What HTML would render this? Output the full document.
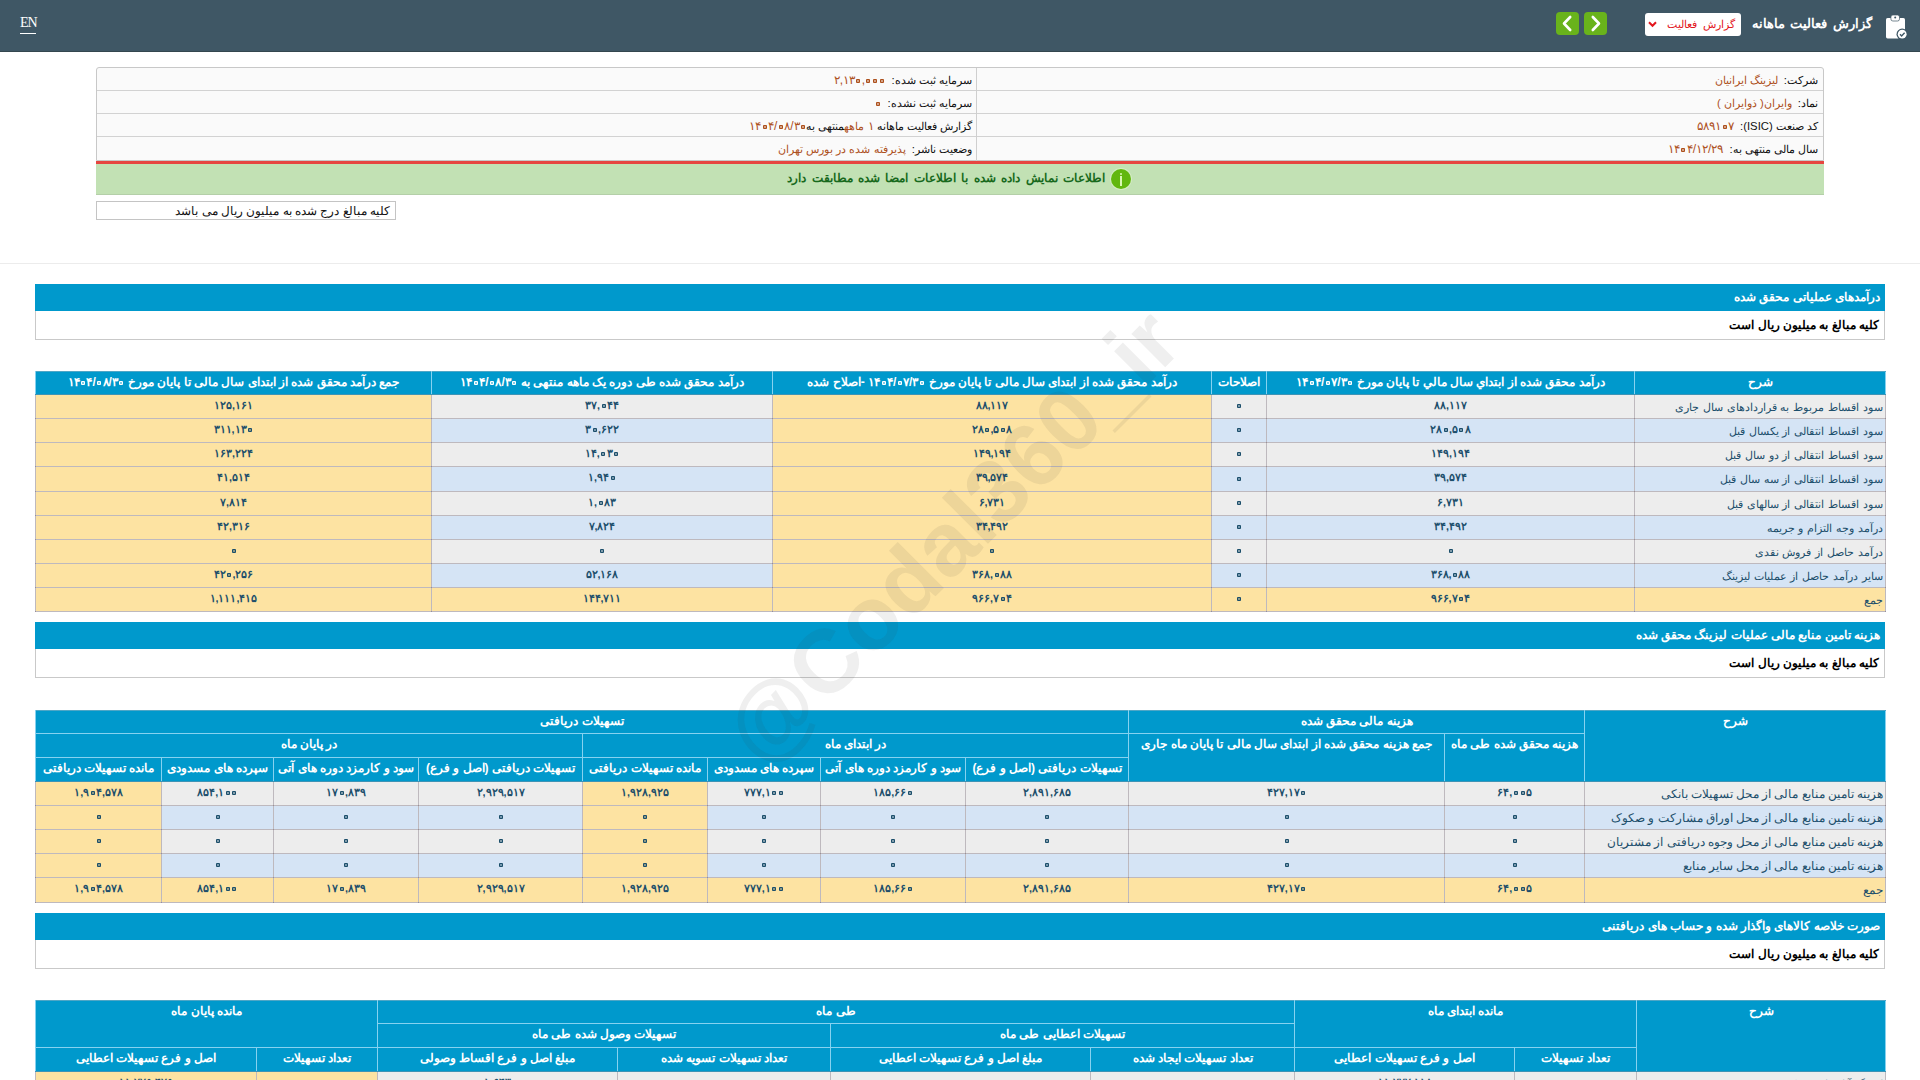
<!DOCTYPE html>
<html lang="fa" dir="rtl">
<head>
<meta charset="utf-8">
<title>گزارش فعالیت ماهانه</title>
<style>
*{box-sizing:border-box;margin:0;padding:0}
html,body{width:1920px;height:1080px;overflow:hidden;background:#fff}
body{position:relative;direction:rtl;font-family:"Liberation Sans",sans-serif;font-size:12px;color:#000}
.abs{position:absolute}
/* ---------- top bar ---------- */
#top{position:absolute;left:0;top:0;width:1920px;height:52px;background:#3f5765;border-bottom:1px solid #34474f}
#en{position:absolute;left:20px;top:13px;width:16px;height:21px;border-bottom:1px solid #fff;color:#fff;font-family:"Liberation Serif",serif;font-size:14px;letter-spacing:-1px;line-height:20px;direction:ltr;text-align:center;white-space:nowrap}
#ttl{position:absolute;right:48px;top:12px;height:24px;line-height:24px;color:#fff;font-weight:bold;font-size:13.4px;word-spacing:2px;white-space:nowrap}
#dd{position:absolute;left:1645px;top:13px;width:96px;height:23px;background:#fff;border-radius:3px;color:#e3161d;font-size:11.2px;word-spacing:3px;line-height:22px;text-align:right;padding-right:6px;white-space:nowrap}
.gb{position:absolute;top:12px;width:23px;height:23px;background:#69b31b;border-radius:4px}
/* ---------- info box ---------- */
#info{position:absolute;left:96px;top:67px;width:1728px;height:94px;background:#fafafa;border:1px solid #c8c8c8;border-radius:3px 3px 0 0}
#info .r{position:absolute;left:0;width:1726px;height:23px;border-bottom:1px solid #d2d2d2}
#info .vd{position:absolute;left:879px;top:0;width:1px;height:93px;background:#cfcfcf}
#info .c{position:absolute;top:0;height:23px;line-height:25px;white-space:nowrap;font-size:11.3px;color:#111}
#info .c.rt{right:5px}
#info .c.lf{right:851px}
#info b{font-weight:normal;color:#ad501c;margin-right:3px}
#info .n{font-size:12px}
#red{position:absolute;left:96px;top:161px;width:1728px;height:3px;background:#e64540}
#grn{position:absolute;left:96px;top:164px;width:1728px;height:31px;background:#c2e1b4;border-bottom:1px solid #b4cfa8}
#grn .t{position:absolute;left:693px;top:0;width:316px;height:30px;line-height:29px;color:#17691c;font-weight:bold;font-size:12px;word-spacing:2.1px;white-space:nowrap;text-align:right}
#grn .i{position:absolute;left:1015px;top:5px;width:20px;height:20px;border-radius:50%;background:#62b70f;box-shadow:0 0 0 1px rgba(225,248,205,.55)}
#grn .i:before{content:"";position:absolute;left:9px;top:4px;width:2.4px;height:2px;background:#d9f7b3;border-radius:1px}
#grn .i:after{content:"";position:absolute;left:9px;top:7px;width:2.4px;height:10px;background:#d9f7b3}
#note{position:absolute;left:96px;top:201px;width:300px;height:19px;border:1px solid #c4c4c4;background:#fff;font-size:12px;line-height:18px;text-align:right;padding-right:5px;white-space:nowrap;color:#111}
#hr{position:absolute;left:0;top:263px;width:1920px;height:1px;background:#ececec}
/* ---------- section title boxes ---------- */
.sec{position:absolute;left:35px;width:1850px;height:56px;border:1px solid #c9c9c9;border-top:none;background:#fff}
.sec .h{position:absolute;left:-1px;top:0;width:1850px;height:27px;background:#0099cc;color:#fff;font-weight:bold;font-size:12px;line-height:27px;text-align:right;padding-right:5px;white-space:nowrap}
.sec .s{position:absolute;right:5px;top:27px;height:28px;line-height:28px;font-weight:bold;font-size:12px;color:#000;white-space:nowrap}
/* ---------- data tables ---------- */
table.g{position:absolute;left:35px;width:1850px;border-collapse:collapse;table-layout:fixed;direction:rtl}
table.g th,table.g td{border:1px solid rgba(100,88,100,.42);overflow:hidden;white-space:nowrap;font-size:12px;padding:0 3px}
table.g th{background:#0099cc;color:#fff;font-weight:bold;text-align:center;vertical-align:top;border-color:#86d2f0;line-height:21px}
table.g thead tr:first-child th{border-top-color:#4fa6c6}
table.g thead tr:last-child th,table.g thead th[rowspan="3"],table.g thead tr:nth-child(2) th[rowspan="2"]{border-bottom-color:#3d94b6}
table.g td{color:#1c4f6b;text-align:center;vertical-align:middle;line-height:19px;padding-bottom:3px;font-weight:bold;font-size:10.8px}
table.g td.l{text-align:right;font-weight:normal;padding-right:2px;padding-bottom:0;line-height:22px;font-size:11.3px;word-spacing:.7px}
#t2 td.l{font-size:11.6px;word-spacing:0}
table.g tr{height:24px}
table.g thead tr{height:24px}
table.g thead tr:first-child{height:23px}
table.g tr.x{height:25px}
table.g tr.a td{background:#ededed}
table.g tr.b td{background:#d5e4f5}
table.g tr td.y,table.g tr.s td{background:#fde3a2}
i.z{display:inline-block;width:6px;height:6px;background:radial-gradient(circle at 50% 50%,transparent .45px,currentColor .95px,currentColor 2px,transparent 2.5px);font-size:0;line-height:0;overflow:hidden;vertical-align:-.1px;margin:0 .4px;letter-spacing:0}
.n{direction:ltr;unicode-bidi:bidi-override;white-space:nowrap}
table.g td .n.s{display:block;position:relative;height:19px}
table.g td .n.s i.z{position:absolute;left:50%;margin:0 0 0 -3px;top:7.6px}
/* ---------- watermark ---------- */
#wm{position:absolute;left:952px;top:536px;width:0;height:0;direction:ltr;z-index:5}
#wm span{position:absolute;left:-320px;top:-55px;width:640px;height:110px;line-height:110px;text-align:center;font-weight:bold;font-size:90px;color:rgba(55,55,55,.08);transform:rotate(-44.9deg);white-space:nowrap;letter-spacing:0}
</style>
</head>
<body>

<!-- top bar -->
<div id="top">
  <div id="en">EN</div>
  <svg class="abs" style="left:1885px;top:14px" width="22" height="26" viewBox="0 0 22 26">
    <rect x="1" y="4" width="19" height="20.4" rx="1.6" fill="#fff"/>
    <rect x="5.9" y="1" width="8.6" height="6" rx="2" fill="#fff" stroke="#3f5765" stroke-width=".7"/>
    <circle cx="10.2" cy="3.5" r="1" fill="#3f5765"/>
    <circle cx="17.2" cy="20.2" r="5.7" fill="#3f5765"/>
    <circle cx="17.2" cy="20.2" r="4.4" fill="#fff"/>
    <path d="M15 20.3l1.6 1.6 3-3.2" fill="none" stroke="#3f5765" stroke-width="1.4"/>
  </svg>
  <div id="ttl">گزارش فعالیت ماهانه</div>
  <div id="dd">گزارش فعالیت
    <svg class="abs" style="left:3px;top:8px" width="9" height="7" viewBox="0 0 9 7"><path d="M1 1.2l3.5 3.6L8 1.2" fill="none" stroke="#e3161d" stroke-width="2"/></svg>
  </div>
  <div class="gb" style="left:1556px"><svg width="23" height="23" viewBox="0 0 23 23"><path d="M14.2 5l-6.2 6.5 6.2 6.5" fill="none" stroke="#fff" stroke-width="2.6" stroke-linecap="round" stroke-linejoin="round"/></svg></div>
  <div class="gb" style="left:1584px"><svg width="23" height="23" viewBox="0 0 23 23"><path d="M8.8 5l6.2 6.5-6.2 6.5" fill="none" stroke="#fff" stroke-width="2.6" stroke-linecap="round" stroke-linejoin="round"/></svg></div>
</div>

<!-- info box -->
<div id="info">
  <div class="r" style="top:0"><div class="c rt">شرکت: <b>لیزینگ ایرانیان</b></div><div class="c lf">سرمایه ثبت شده: <b><span class="n">۲,۱۳<i class="z">۰</i>,<i class="z">۰</i><i class="z">۰</i><i class="z">۰</i></span></b></div></div>
  <div class="r" style="top:23px"><div class="c rt">نماد: <b>وایران( ذوایران )</b></div><div class="c lf">سرمایه ثبت نشده: <b><span class="n s"><i class="z">۰</i></span></b></div></div>
  <div class="r" style="top:46px"><div class="c rt">کد صنعت (ISIC): <b><span class="n">۵۸۹۱<i class="z">۰</i>۷</span></b></div><div class="c lf">گزارش فعالیت ماهانه <b style="margin:0"><span class="n">۱</span> ماهه</b>منتهی به<b style="margin:0"><span class="n">۱۴<i class="z">۰</i>۴/<i class="z">۰</i>۸/۳<i class="z">۰</i></span></b></div></div>
  <div class="r" style="top:69px;border-bottom:none"><div class="c rt">سال مالی منتهی به: <b><span class="n">۱۴<i class="z">۰</i>۴/۱۲/۲۹</span></b></div><div class="c lf">وضعیت ناشر: <b>پذیرفته شده در بورس تهران</b></div></div>
  <div class="vd"></div>
</div>
<div id="red"></div>
<div id="grn"><div class="t">اطلاعات نمایش داده شده با اطلاعات امضا شده مطابقت دارد</div><div class="i"></div></div>
<div id="note">کلیه مبالغ درج شده به میلیون ریال می باشد</div>
<div id="hr"></div>

<!-- section 1 -->
<div class="sec" style="top:284px"><div class="h">درآمدهای عملیاتی محقق شده</div><div class="s">کلیه مبالغ به میلیون ریال است</div></div>

<table class="g" id="t1" style="top:371px">
<colgroup><col style="width:251px"><col style="width:368px"><col style="width:55px"><col style="width:439px"><col style="width:341px"><col style="width:396px"></colgroup>
<thead><tr class="h1">
<th>شرح</th>
<th>درآمد محقق شده از ابتداي سال مالي تا پايان مورخ <span class="n">۱۴<i class="z">۰</i>۴/<i class="z">۰</i>۷/۳<i class="z">۰</i></span></th>
<th>اصلاحات</th>
<th>درآمد محقق شده از ابتدای سال مالی تا پایان مورخ <span class="n">۱۴<i class="z">۰</i>۴/<i class="z">۰</i>۷/۳<i class="z">۰</i></span> -اصلاح شده</th>
<th>درآمد محقق شده طی دوره یک ماهه منتهی به <span class="n">۱۴<i class="z">۰</i>۴/<i class="z">۰</i>۸/۳<i class="z">۰</i></span></th>
<th>جمع درآمد محقق شده از ابتدای سال مالی تا پایان مورخ <span class="n">۱۴<i class="z">۰</i>۴/<i class="z">۰</i>۸/۳<i class="z">۰</i></span></th>
</tr></thead>
<tbody>
<tr class="a"><td class="l">سود اقساط مربوط به قراردادهای سال جاری</td><td><span class="n">۸۸,۱۱۷</span></td><td><span class="n s"><i class="z">۰</i></span></td><td class="y"><span class="n">۸۸,۱۱۷</span></td><td><span class="n">۳۷,<i class="z">۰</i>۴۴</span></td><td class="y"><span class="n">۱۲۵,۱۶۱</span></td></tr>
<tr class="b"><td class="l">سود اقساط انتقالی از یکسال قبل</td><td><span class="n">۲۸<i class="z">۰</i>,۵<i class="z">۰</i>۸</span></td><td><span class="n s"><i class="z">۰</i></span></td><td class="y"><span class="n">۲۸<i class="z">۰</i>,۵<i class="z">۰</i>۸</span></td><td><span class="n">۳<i class="z">۰</i>,۶۲۲</span></td><td class="y"><span class="n">۳۱۱,۱۳<i class="z">۰</i></span></td></tr>
<tr class="a"><td class="l">سود اقساط انتقالی از دو سال قبل</td><td><span class="n">۱۴۹,۱۹۴</span></td><td><span class="n s"><i class="z">۰</i></span></td><td class="y"><span class="n">۱۴۹,۱۹۴</span></td><td><span class="n">۱۴,<i class="z">۰</i>۳<i class="z">۰</i></span></td><td class="y"><span class="n">۱۶۳,۲۲۴</span></td></tr>
<tr class="b x"><td class="l">سود اقساط انتقالی از سه سال قبل</td><td><span class="n">۳۹,۵۷۴</span></td><td><span class="n s"><i class="z">۰</i></span></td><td class="y"><span class="n">۳۹,۵۷۴</span></td><td><span class="n">۱,۹۴<i class="z">۰</i></span></td><td class="y"><span class="n">۴۱,۵۱۴</span></td></tr>
<tr class="a"><td class="l">سود اقساط انتقالی از سالهای قبل</td><td><span class="n">۶,۷۳۱</span></td><td><span class="n s"><i class="z">۰</i></span></td><td class="y"><span class="n">۶,۷۳۱</span></td><td><span class="n">۱,<i class="z">۰</i>۸۳</span></td><td class="y"><span class="n">۷,۸۱۴</span></td></tr>
<tr class="b"><td class="l">درآمد وجه التزام و جریمه</td><td><span class="n">۳۴,۴۹۲</span></td><td><span class="n s"><i class="z">۰</i></span></td><td class="y"><span class="n">۳۴,۴۹۲</span></td><td><span class="n">۷,۸۲۴</span></td><td class="y"><span class="n">۴۲,۳۱۶</span></td></tr>
<tr class="a"><td class="l">درآمد حاصل از فروش نقدی</td><td><span class="n s"><i class="z">۰</i></span></td><td><span class="n s"><i class="z">۰</i></span></td><td class="y"><span class="n s"><i class="z">۰</i></span></td><td><span class="n s"><i class="z">۰</i></span></td><td class="y"><span class="n s"><i class="z">۰</i></span></td></tr>
<tr class="b"><td class="l">سایر درآمد حاصل از عملیات لیزینگ</td><td><span class="n">۳۶۸,<i class="z">۰</i>۸۸</span></td><td><span class="n s"><i class="z">۰</i></span></td><td class="y"><span class="n">۳۶۸,<i class="z">۰</i>۸۸</span></td><td><span class="n">۵۲,۱۶۸</span></td><td class="y"><span class="n">۴۲<i class="z">۰</i>,۲۵۶</span></td></tr>
<tr class="s"><td class="l">جمع</td><td><span class="n">۹۶۶,۷<i class="z">۰</i>۴</span></td><td><span class="n s"><i class="z">۰</i></span></td><td><span class="n">۹۶۶,۷<i class="z">۰</i>۴</span></td><td><span class="n">۱۴۴,۷۱۱</span></td><td><span class="n">۱,۱۱۱,۴۱۵</span></td></tr>
</tbody>
</table>

<!-- section 2 -->
<div class="sec" style="top:622px"><div class="h">هزینه تامین منابع مالی عملیات لیزینگ محقق شده</div><div class="s">کلیه مبالغ به میلیون ریال است</div></div>

<table class="g" id="t2" style="top:710px">
<colgroup><col style="width:301px"><col style="width:140px"><col style="width:316px"><col style="width:163px"><col style="width:145px"><col style="width:113px"><col style="width:125px"><col style="width:164px"><col style="width:145px"><col style="width:112px"><col style="width:126px"></colgroup>
<thead>
<tr><th rowspan="3">شرح</th><th colspan="2">هزینه مالی محقق شده</th><th colspan="8">تسهیلات دریافتی</th></tr>
<tr><th rowspan="2">هزینه محقق شده طی ماه</th><th rowspan="2">جمع هزینه محقق شده از ابتدای سال مالی تا پایان ماه جاری</th><th colspan="4">در ابتدای ماه</th><th colspan="4">در پایان ماه</th></tr>
<tr><th>تسهیلات دریافتی (اصل و فرع)</th><th>سود و کارمزد دوره های آتی</th><th>سپرده های مسدودی</th><th>مانده تسهیلات دریافتی</th><th>تسهیلات دریافتی (اصل و فرع)</th><th>سود و کارمزد دوره های آتی</th><th>سپرده های مسدودی</th><th>مانده تسهیلات دریافتی</th></tr>
</thead>
<tbody>
<tr class="a"><td class="l">هزینه تامین منابع مالی از محل تسهیلات بانکی</td><td><span class="n">۶۴,<i class="z">۰</i><i class="z">۰</i>۵</span></td><td><span class="n">۴۲۷,۱۷<i class="z">۰</i></span></td><td><span class="n">۲,۸۹۱,۶۸۵</span></td><td><span class="n">۱۸۵,۶۶<i class="z">۰</i></span></td><td><span class="n">۷۷۷,۱<i class="z">۰</i><i class="z">۰</i></span></td><td class="y"><span class="n">۱,۹۲۸,۹۲۵</span></td><td><span class="n">۲,۹۲۹,۵۱۷</span></td><td><span class="n">۱۷<i class="z">۰</i>,۸۳۹</span></td><td><span class="n">۸۵۴,۱<i class="z">۰</i><i class="z">۰</i></span></td><td class="y"><span class="n">۱,۹<i class="z">۰</i>۴,۵۷۸</span></td></tr>
<tr class="b"><td class="l">هزینه تامین منابع مالی از محل اوراق مشارکت و صکوک</td><td><span class="n s"><i class="z">۰</i></span></td><td><span class="n s"><i class="z">۰</i></span></td><td><span class="n s"><i class="z">۰</i></span></td><td><span class="n s"><i class="z">۰</i></span></td><td><span class="n s"><i class="z">۰</i></span></td><td class="y"><span class="n s"><i class="z">۰</i></span></td><td><span class="n s"><i class="z">۰</i></span></td><td><span class="n s"><i class="z">۰</i></span></td><td><span class="n s"><i class="z">۰</i></span></td><td class="y"><span class="n s"><i class="z">۰</i></span></td></tr>
<tr class="a"><td class="l">هزینه تامین منابع مالی از محل وجوه دریافتی از مشتریان</td><td><span class="n s"><i class="z">۰</i></span></td><td><span class="n s"><i class="z">۰</i></span></td><td><span class="n s"><i class="z">۰</i></span></td><td><span class="n s"><i class="z">۰</i></span></td><td><span class="n s"><i class="z">۰</i></span></td><td class="y"><span class="n s"><i class="z">۰</i></span></td><td><span class="n s"><i class="z">۰</i></span></td><td><span class="n s"><i class="z">۰</i></span></td><td><span class="n s"><i class="z">۰</i></span></td><td class="y"><span class="n s"><i class="z">۰</i></span></td></tr>
<tr class="b"><td class="l">هزینه تامین منابع مالی از محل سایر منابع</td><td><span class="n s"><i class="z">۰</i></span></td><td><span class="n s"><i class="z">۰</i></span></td><td><span class="n s"><i class="z">۰</i></span></td><td><span class="n s"><i class="z">۰</i></span></td><td><span class="n s"><i class="z">۰</i></span></td><td class="y"><span class="n s"><i class="z">۰</i></span></td><td><span class="n s"><i class="z">۰</i></span></td><td><span class="n s"><i class="z">۰</i></span></td><td><span class="n s"><i class="z">۰</i></span></td><td class="y"><span class="n s"><i class="z">۰</i></span></td></tr>
<tr class="s x"><td class="l">جمع</td><td><span class="n">۶۴,<i class="z">۰</i><i class="z">۰</i>۵</span></td><td><span class="n">۴۲۷,۱۷<i class="z">۰</i></span></td><td><span class="n">۲,۸۹۱,۶۸۵</span></td><td><span class="n">۱۸۵,۶۶<i class="z">۰</i></span></td><td><span class="n">۷۷۷,۱<i class="z">۰</i><i class="z">۰</i></span></td><td><span class="n">۱,۹۲۸,۹۲۵</span></td><td><span class="n">۲,۹۲۹,۵۱۷</span></td><td><span class="n">۱۷<i class="z">۰</i>,۸۳۹</span></td><td><span class="n">۸۵۴,۱<i class="z">۰</i><i class="z">۰</i></span></td><td><span class="n">۱,۹<i class="z">۰</i>۴,۵۷۸</span></td></tr>
</tbody>
</table>

<!-- section 3 -->
<div class="sec" style="top:913px"><div class="h">صورت خلاصه کالاهای واگذار شده و حساب های دریافتنی</div><div class="s">کلیه مبالغ به میلیون ریال است</div></div>

<table class="g" id="t3" style="top:1000px">
<colgroup><col style="width:249px"><col style="width:122px"><col style="width:220px"><col style="width:204px"><col style="width:260px"><col style="width:213px"><col style="width:240px"><col style="width:121px"><col style="width:221px"></colgroup>
<thead>
<tr><th rowspan="3">شرح</th><th colspan="2" rowspan="2">مانده ابتدای ماه</th><th colspan="4">طی ماه</th><th colspan="2" rowspan="2">مانده پایان ماه</th></tr>
<tr><th colspan="2">تسهیلات اعطایی طی ماه</th><th colspan="2">تسهیلات وصول شده طی ماه</th></tr>
<tr><th>تعداد تسهیلات</th><th>اصل و فرع تسهیلات اعطایی</th><th>تعداد تسهیلات ایجاد شده</th><th>مبلغ اصل و فرع تسهیلات اعطایی</th><th>تعداد تسهیلات تسویه شده</th><th>مبلغ اصل و فرع اقساط وصولی</th><th>تعداد تسهیلات</th><th>اصل و فرع تسهیلات اعطایی</th></tr>
</thead>
<tbody>
<tr class="a"><td class="l">لیزینگ آپارتمان مسکونی</td><td><span class="n s"><i class="z">۰</i></span></td><td><span class="n">۱۱,۷۷۷,۱۱۸</span></td><td><span class="n s"><i class="z">۰</i></span></td><td><span class="n s"><i class="z">۰</i></span></td><td><span class="n s"><i class="z">۰</i></span></td><td><span class="n">۱,۶۴۳</span></td><td class="y"><span class="n s"><i class="z">۰</i></span></td><td class="y"><span class="n">۱۱,۷۷۵,۴۷۵</span></td></tr>
</tbody>
</table>

<div id="wm"><span>@Codal360_ir</span></div>
</body>
</html>
